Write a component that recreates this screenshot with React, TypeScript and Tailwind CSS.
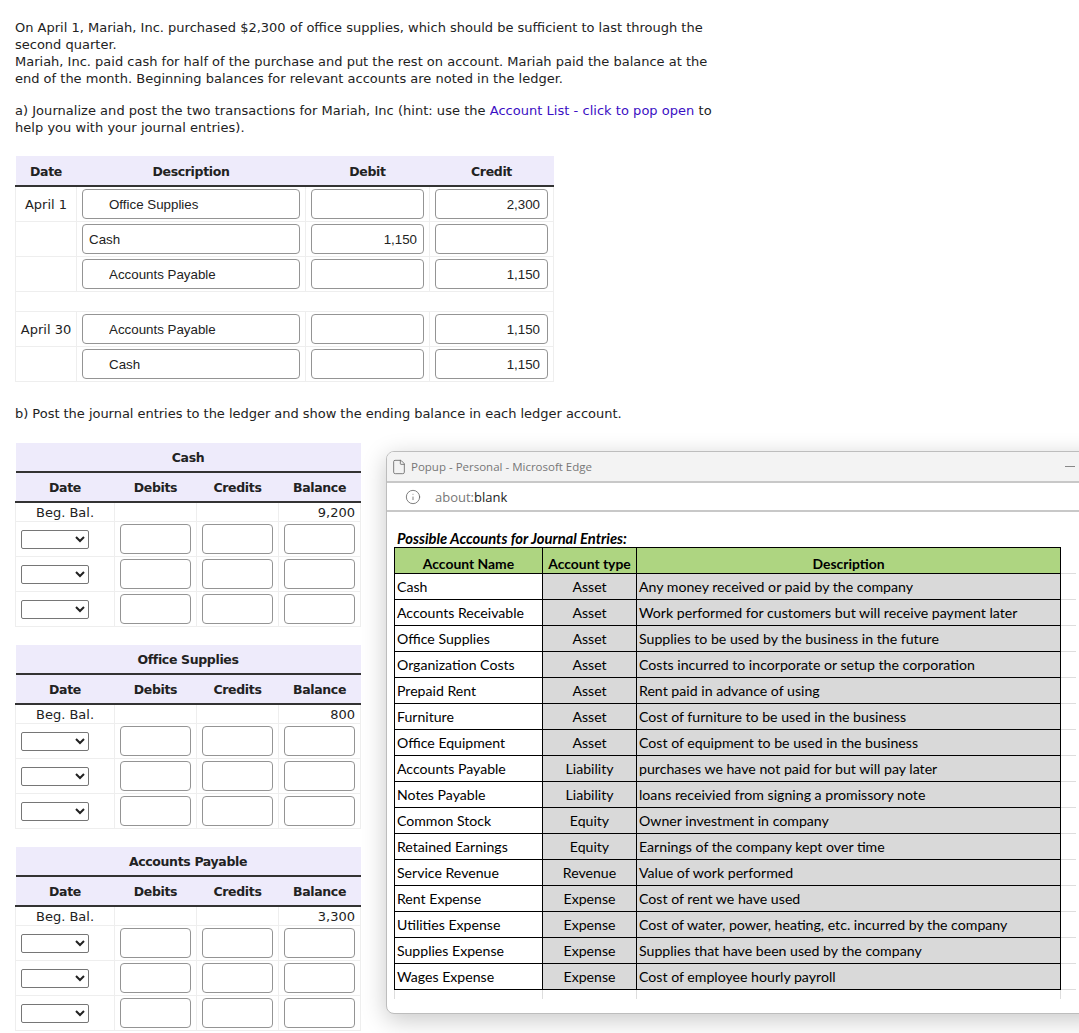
import { File, Info } from "lucide-react";

const JOURNAL = [
  { date: "April 1", account: "Office Supplies", indent: true, debit: "", credit: "2,300" },
  { date: "", account: "Cash", indent: false, debit: "1,150", credit: "" },
  { date: "", account: "Accounts Payable", indent: true, debit: "", credit: "1,150" },
  null,
  { date: "April 30", account: "Accounts Payable", indent: true, debit: "", credit: "1,150" },
  { date: "", account: "Cash", indent: true, debit: "", credit: "1,150" },
];

const LEDGERS = [
  { title: "Cash", balance: "9,200" },
  { title: "Office Supplies", balance: "800" },
  { title: "Accounts Payable", balance: "3,300" },
];

const ACCOUNTS = [
  ["Cash", "Asset", "Any money received or paid by the company"],
  ["Accounts Receivable", "Asset", "Work performed for customers but will receive payment later"],
  ["Office Supplies", "Asset", "Supplies to be used by the business in the future"],
  ["Organization Costs", "Asset", "Costs incurred to incorporate or setup the corporation"],
  ["Prepaid Rent", "Asset", "Rent paid in advance of using"],
  ["Furniture", "Asset", "Cost of furniture to be used in the business"],
  ["Office Equipment", "Asset", "Cost of equipment to be used in the business"],
  ["Accounts Payable", "Liability", "purchases we have not paid for but will pay later"],
  ["Notes Payable", "Liability", "loans receivied from signing a promissory note"],
  ["Common Stock", "Equity", "Owner investment in company"],
  ["Retained Earnings", "Equity", "Earnings of the company kept over time"],
  ["Service Revenue", "Revenue", "Value of work performed"],
  ["Rent Expense", "Expense", "Cost of rent we have used"],
  ["Utilities Expense", "Expense", "Cost of water, power, heating, etc. incurred by the company"],
  ["Supplies Expense", "Expense", "Supplies that have been used by the company"],
  ["Wages Expense", "Expense", "Cost of employee hourly payroll"],
];

const Field = ({ value = "", className = "" }: { value?: string; className?: string }) => (
  <input
    readOnly
    value={value}
    className={`block h-[30px] rounded-[4px] border border-[#949494] bg-white pt-[2px] text-[13.33px] text-[#222] font-['Liberation_Sans',sans-serif] ${className}`}
  />
);

const JournalTable = () => (
  <table className="w-[539px] table-fixed border-collapse">
    <colgroup>
      <col className="w-[61px]" />
      <col className="w-[229px]" />
      <col className="w-[124px]" />
      <col />
    </colgroup>
    <thead>
      <tr className="h-[30px] bg-[#eeebfb] border-b-2 border-[#333] text-[12.5px] tracking-[-0.35px]">
        <th className="pt-[2px] font-bold">Date</th>
        <th className="pt-[2px] font-bold">Description</th>
        <th className="pt-[2px] font-bold">Debit</th>
        <th className="pt-[2px] font-bold">Credit</th>
      </tr>
    </thead>
    <tbody>
      {JOURNAL.map((row, i) =>
        row ? (
          <tr key={i} className="h-[35px]">
            <td className="border border-[#eee] pt-[2px] text-center text-[13px]">{row.date}</td>
            <td className="border border-[#eee] pl-[5px]">
              <Field value={row.account} className={`w-[218px] ${row.indent ? "pl-[26px]" : "pl-[6px]"}`} />
            </td>
            <td className="border border-[#eee] pl-[5px]">
              <Field value={row.debit} className="w-[113px] pr-[6px] text-right" />
            </td>
            <td className="border border-[#eee] pl-[5px]">
              <Field value={row.credit} className="w-[113px] pr-[7px] text-right" />
            </td>
          </tr>
        ) : (
          <tr key={i} className="h-[20px]">
            <td colSpan={4} className="border border-[#eee]" />
          </tr>
        )
      )}
    </tbody>
  </table>
);

const LedgerTable = ({ title, balance }: { title: string; balance: string }) => (
  <table className="w-[346px] table-fixed border-collapse">
    <colgroup>
      <col className="w-[99px]" />
      <col className="w-[82px]" />
      <col className="w-[82px]" />
      <col />
    </colgroup>
    <thead className="text-[12.5px] tracking-[-0.35px]">
      <tr className="h-[29px] bg-[#eeebfb] border-b-2 border-[#333]">
        <th colSpan={4} className="pt-[1px] font-bold">{title}</th>
      </tr>
      <tr className="h-[30px] bg-[#eeebfb] border-b-2 border-[#333]">
        <th className="pt-[1px] font-bold">Date</th>
        <th className="pt-[1px] font-bold">Debits</th>
        <th className="pt-[1px] font-bold">Credits</th>
        <th className="pt-[1px] font-bold">Balance</th>
      </tr>
    </thead>
    <tbody>
      <tr className="h-[20px] text-[13px]">
        <td className="border border-[#eee] pt-[1px] text-center">Beg. Bal.</td>
        <td className="border border-[#eee]" />
        <td className="border border-[#eee]" />
        <td className="border border-[#eee] pr-[5px] pt-[1px] text-right">{balance}</td>
      </tr>
      {[0, 1, 2].map((i) => (
        <tr key={i} className="h-[35px]">
          <td className="border border-[#eee] pl-[5px]">
            <select className="block h-[19px] w-[68px] rounded-[2px] border border-[#767676] bg-white text-[13px]" />
          </td>
          {[0, 1, 2].map((j) => (
            <td key={j} className="border border-[#eee] pl-[5px]">
              <Field className="w-[71px]" />
            </td>
          ))}
        </tr>
      ))}
    </tbody>
  </table>
);

const PopupWindow = () => (
  <div className="absolute left-[386px] top-[451px] h-[563px] w-[720px] overflow-hidden rounded-[8px] border border-[#bdbdbd] bg-white shadow-[0_6px_24px_rgba(0,0,0,0.22)] font-['Open_Sans',sans-serif]">
    <div className="flex h-[31px] items-center border-b-2 border-[#c8c8c8] bg-[#f3f3f3] pl-[4px]">
      <File className="h-[16px] w-[16px] text-[#666]" strokeWidth={1.25} />
      <span className="ml-[4px] text-[11.5px] text-[#777]">Popup - Personal - Microsoft Edge</span>
      <div className="ml-[473px] h-[1px] w-[10px] bg-[#888]" />
    </div>
    <div className="flex h-[29px] items-center border-b-2 border-[#c8c8c8] pl-[18px] pt-[1px] text-[13px]">
      <Info className="h-[16px] w-[16px] text-[#666]" strokeWidth={1.25} />
      <span className="ml-[14px] text-[#777]">about:</span>
      <span className="text-[#222]">blank</span>
    </div>
    <div className="pl-[7px] pt-[17px] font-['Lato',sans-serif] text-[14.1px] text-black">
      <p className="h-[18px] pl-[3px] text-[14.75px] font-bold italic leading-[18px]">Possible Accounts for Journal Entries:</p>
      <table className="w-[682px] table-fixed border-collapse">
        <colgroup>
          <col className="w-[148px]" />
          <col className="w-[94px]" />
          <col className="w-[424px]" />
          <col />
        </colgroup>
        <thead>
          <tr className="h-[26px] text-[13.9px]">
            <th className="border border-black bg-[#aed581] pt-[5px] font-bold">Account Name</th>
            <th className="border border-black bg-[#aed581] pt-[5px] font-bold">Account type</th>
            <th className="border border-black bg-[#aed581] pt-[5px] font-bold">Description</th>
            <th className="border-b border-[#ddd]" />
          </tr>
        </thead>
        <tbody>
          {ACCOUNTS.map(([name, type, desc]) => (
            <tr key={name} className="h-[26px]">
              <td className="border border-black pl-[2px]">{name}</td>
              <td className="border border-black bg-[#d9d9d9] text-center">{type}</td>
              <td className="border border-black bg-[#d9d9d9] pl-[2px] text-[14.15px]">{desc}</td>
              <td className="border-b border-[#ddd]" />
            </tr>
          ))}
          <tr className="h-[9px]">
            <td className="border-x border-[#ddd]" />
            <td className="border-x border-[#ddd]" />
            <td className="border-x border-[#ddd]" />
            <td />
          </tr>
        </tbody>
      </table>
    </div>
  </div>
);

export default function App() {
  return (
    <div className="relative h-[1033px] w-[1079px] overflow-hidden bg-white px-[15px] pt-[19px] font-['DejaVu_Sans',sans-serif] text-[13px] leading-[17px] text-[#222]">
      <p className="w-[700px]">
        On April 1, Mariah, Inc. purchased $2,300 of office supplies, which should be sufficient to last through the second quarter.
        <br />
        Mariah, Inc. paid cash for half of the purchase and put the rest on account. Mariah paid the balance at the end of the month. Beginning balances for relevant accounts are noted in the ledger.
      </p>
      <p className="mt-[15px] w-[700px] tracking-[0.03px]">
        a) Journalize and post the two transactions for Mariah, Inc (hint: use the <span className="text-[#3b10c4]">Account List - click to pop open</span> to help you with your journal entries).
      </p>
      <div className="mt-[20px]">
        <JournalTable />
      </div>
      <p className="mt-[23px] tracking-[-0.03px]">b) Post the journal entries to the ledger and show the ending balance in each ledger account.</p>
      <div className="mt-[21px] flex flex-col gap-[17.5px]">
        {LEDGERS.map((l) => (
          <LedgerTable key={l.title} title={l.title} balance={l.balance} />
        ))}
      </div>
      <PopupWindow />
    </div>
  );
}
